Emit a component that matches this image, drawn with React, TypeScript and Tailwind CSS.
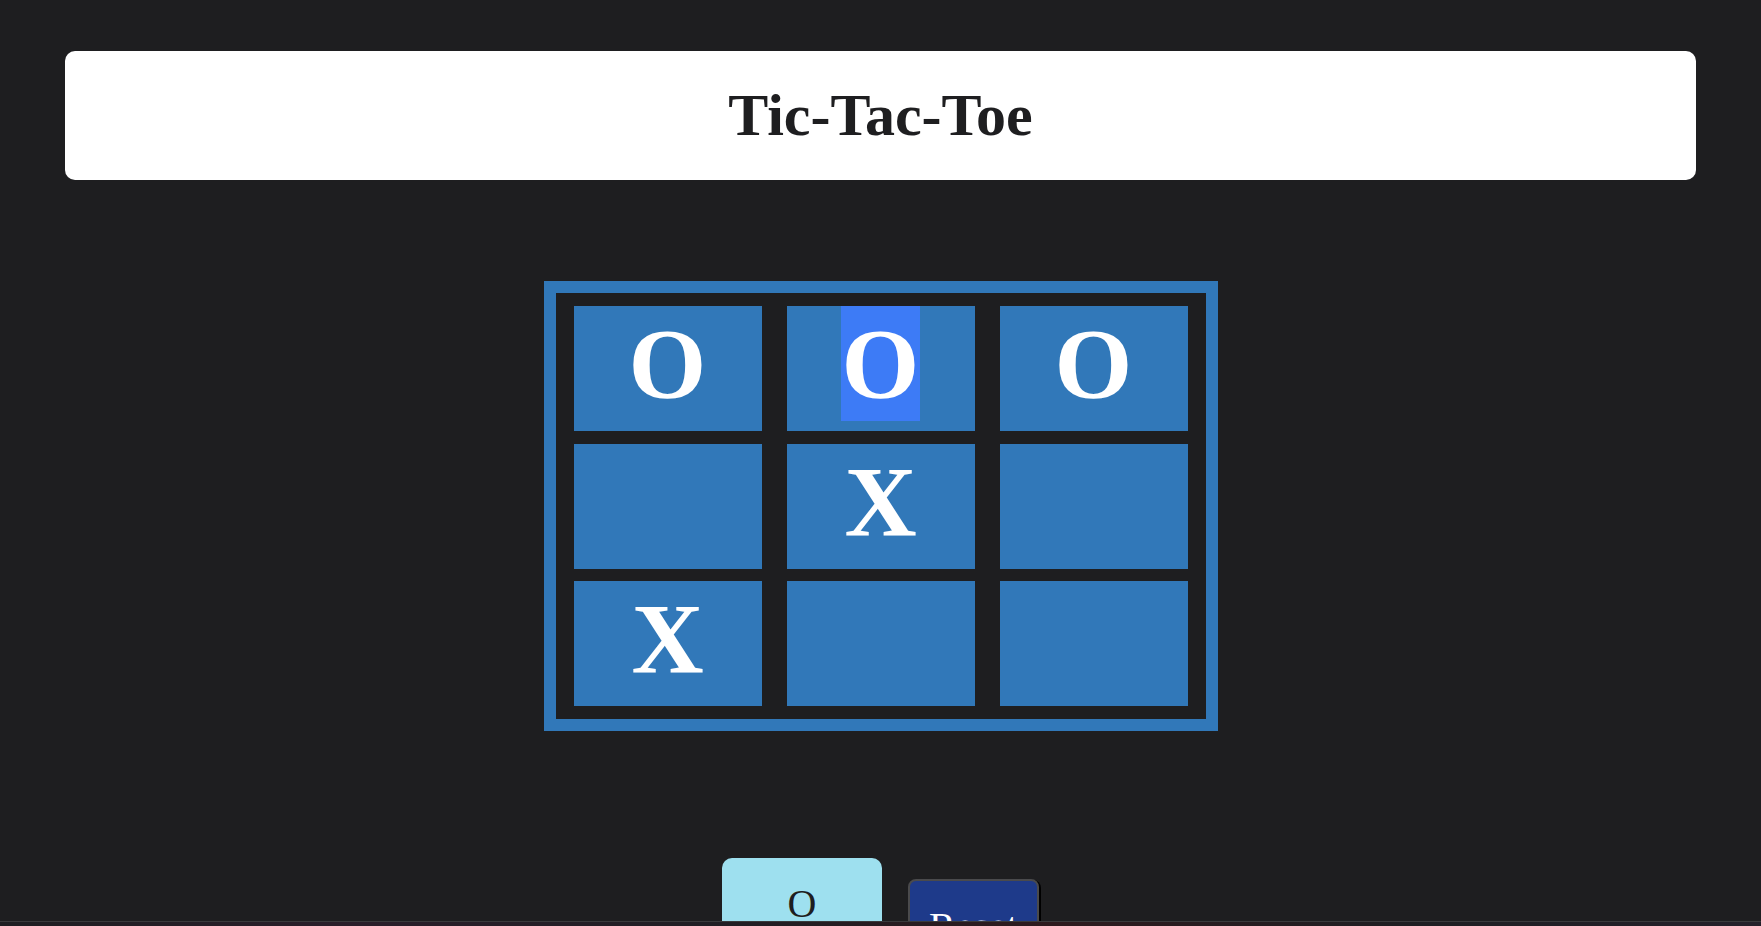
import React from "react";

type Mark = "X" | "O" | "";

const board: Mark[] = ["O", "O", "O", "", "X", "", "X", "", ""];

const App: React.FC = () => {
  return (
    <div className="h-screen overflow-hidden bg-[#1e1e20] pt-[51px] font-['Liberation_Serif','Times_New_Roman',serif]">
      {/* Title card */}
      <div className="mx-[65px] rounded-[10px] bg-white py-[30px] text-center">
        <h1 className="text-[60px] font-bold leading-[69px] text-[#1e1e20]">Tic-Tac-Toe</h1>
      </div>

      {/* Board */}
      <div className="mx-auto mt-[101px] w-fit border-[12px] border-[#3178b9] px-[18px] py-[13px]">
        <div className="grid grid-cols-[repeat(3,188px)] gap-x-[25px] gap-y-[12.5px]">
          {board.map((mark, i) => (
            <div
              key={i}
              className="h-[125px] bg-[#3178b9] text-center text-[100px] font-bold leading-[115px] text-white"
            >
              {i === 1 ? (
                <span className="inline-block bg-[#3d7bf6] px-[1px]">{mark}</span>
              ) : (
                mark
              )}
            </div>
          ))}
        </div>
      </div>

      {/* Controls */}
      <div className="mt-[127px] flex items-start justify-center gap-[26px]">
        <div className="h-[120px] w-[160px] rounded-t-[10px] bg-[#9ee0ef] pt-[23px] text-center text-[40px] leading-[46px] text-[#1e1e20]">
          O
        </div>
        <button className="mt-[21px] flex h-[100px] items-start self-start rounded-[8px] border-2 border-[#4a4a4c] bg-[#1e3a8a] px-[19px] pt-[23px] text-[40px] leading-[46px] text-white shadow-[2px_1px_0_#000]">
          Reset
        </button>
      </div>

      {/* bottom strip */}
      <div className="fixed inset-x-0 bottom-0 h-[5px] border-t border-[#3a3a3c] bg-[linear-gradient(90deg,#1e1e22,#2a1e2a_20%,#201e24_40%,#2e1a1e_60%,#1e1e22_80%,#24202a)]" />
    </div>
  );
};

export default App;
